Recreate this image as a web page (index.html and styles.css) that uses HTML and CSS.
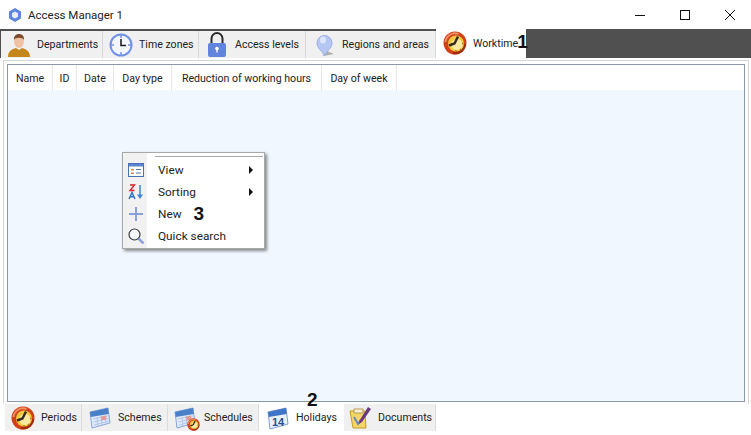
FILE: index.html
```html
<!DOCTYPE html>
<html lang="en">
<head>
  <meta charset="UTF-8">
  <title>Access Manager 1</title>
  <link rel="stylesheet" href="styles.css">
</head>
<body>

<svg class="defs" width="0" height="0">
  <defs>
    <symbol id="ic-worktime" viewBox="0 0 24 24">
      <circle cx="12" cy="12" r="11.5" fill="#d2401a"/>
      <path d="M2.500 11a9.500 9.500 0 0 1 13-8" fill="none" stroke="#ee8f66" stroke-width="2"/>
      <path d="M22 13a10 10 0 0 1-12 9" fill="none" stroke="#9c2a10" stroke-width="2"/>
      <circle cx="13" cy="12.500" r="8" fill="#f2c83e"/>
      <circle cx="14" cy="13.500" r="5.500" fill="#f9e9a0"/>
      <path d="M15 5.500l-3.500 7 -5.500 2" fill="none" stroke="#352c24" stroke-width="2.400"/>
      <path d="M19 12.500h1.500M13 19v1.500M17 18l1 1" stroke="#a37a22" stroke-width="1.500"/>
    </symbol>
    <symbol id="ic-schemes" viewBox="0 0 24 24">
      <path d="M2 6l18-4 2 15-18 5z" fill="#dfe9f8" stroke="#86a6d8"/>
      <path d="M2 6l18-4 .8 6-18 3z" fill="#4a80c8"/>
      <path d="M5 13l15-3M5.400 16l15.200-3.500M6 19l15-4M9 11l1 9.500M13 10l1 9.500M17 9.500l1 9" stroke="#a9c0e6" stroke-width=".8"/>
      <path d="M13 10.500l5-1 .5 4-5 1z" fill="#e79a92"/>
    </symbol>
  </defs>
</svg>

<div class="titlebar">
  <svg class="app-icon" width="14" height="14" viewBox="0 0 14 14">
    <path d="M7 0l6 3.500v7L7 14l-6-3.500v-7z" fill="#5f86dc"/>
    <path d="M7 3.500l3 1.800v3.400l-3 1.800-3-1.800V5.300z" fill="#e6edfb"/>
  </svg>
  <span class="title">Access Manager 1</span>
  <div class="win-btns">
    <svg width="10" height="10" viewBox="0 0 10 10"><path d="M0 5.500h10" stroke="#111"/></svg>
    <svg width="10" height="10" viewBox="0 0 10 10"><rect x=".5" y=".5" width="9" height="9" fill="none" stroke="#111"/></svg>
    <svg width="10" height="10" viewBox="0 0 10 10"><path d="M0 0l10 10M10 0L0 10" stroke="#111"/></svg>
  </div>
</div>

<div class="tabs-top">
  <div class="tab tab-dep">
    <svg width="22" height="25" viewBox="0 0 22 25">
      <ellipse cx="11" cy="9" rx="5" ry="7" fill="#efc1a2"/>
      <path d="M6 8C5 0 17 0 16 8c-1-3-9-3-10 0z" fill="#7d4c2c"/>
      <path d="M0 25c0-6 4-8 8-9l3 2 3-2c4 1 8 3 8 9z" fill="#c4851a"/>
    </svg>
    <span>Departments</span>
  </div>
  <div class="tab tab-zones">
    <svg width="24" height="24" viewBox="0 0 24 24">
      <circle cx="12" cy="12" r="10.500" fill="#f4f7fe" stroke="#7393e2" stroke-width="2"/>
      <path d="M12 1v4M12 19v4M1 12h4M19 12h4" stroke="#7393e2" stroke-width="1.500"/>
      <path d="M12 6v6.500h5" fill="none" stroke="#222" stroke-width="1.600"/>
    </svg>
    <span>Time zones</span>
  </div>
  <div class="tab tab-levels">
    <svg width="20" height="25" viewBox="0 0 20 25">
      <path d="M4.500 12V6.500a5.500 5.500 0 0 1 11 0V12" fill="none" stroke="#2a2a2a" stroke-width="2"/>
      <rect x="1" y="11" width="18" height="14" rx="2" fill="#6384de"/>
      <circle cx="10" cy="16.500" r="1.800" fill="#fff"/>
      <path d="M9.300 17h1.400v3.500H9.300z" fill="#fff"/>
    </svg>
    <span>Access levels</span>
  </div>
  <div class="tab tab-regions">
    <svg width="22" height="24" viewBox="0 0 22 24">
      <path d="M9 23l10-2-7-3z" fill="#b0b0b0"/>
      <path d="M9 23c-1-5-7-7-7-13a7.500 7.500 0 0 1 15 0c0 6-6 8-8 13z" fill="#b6c6f3" stroke="#9cb0e8"/>
      <ellipse cx="8" cy="7" rx="3" ry="3.500" fill="#dfe6fb"/>
    </svg>
    <span>Regions and areas</span>
  </div>
  <div class="tab tab-work active">
    <svg width="24" height="24"><use href="#ic-worktime"/></svg>
    <span>Worktime</span><b class="mark">1</b>
  </div>
</div>

<div class="panel">
  <div class="grid">
    <div class="grid-head">
      <div class="col col-name">Name</div>
      <div class="col col-id">ID</div>
      <div class="col col-date">Date</div>
      <div class="col col-type">Day type</div>
      <div class="col col-red">Reduction of working hours</div>
      <div class="col col-dow">Day of week</div>
    </div>
    <div class="grid-body">
      <div class="menu">
        <div class="menu-row">
          <svg width="16" height="14" viewBox="0 0 16 14">
            <rect x=".5" y=".5" width="15" height="13" fill="#fff" stroke="#4a70b8"/>
            <path d="M1 1h14v2.500H1z" fill="#5a86d0"/>
            <path d="M3 6h3v1.500H3zM3 9.500h3V11H3z" fill="#d8873c"/>
            <path d="M8 6h5v1H8zM8 9.500h5v1H8z" fill="#5a76a8"/>
          </svg>
          <span class="menu-text">View</span><i class="arrow"></i>
        </div>
        <div class="menu-row">
          <svg width="16" height="16" viewBox="0 0 16 16">
            <path d="M2 1h4.500L2 6.500h4.500" fill="none" stroke="#d8232a" stroke-width="1.400"/>
            <path d="M1 15l3-6.500L7 15M2 12.800h4" fill="none" stroke="#2f6fc4" stroke-width="1.400"/>
            <path d="M12 1v11" stroke="#3d86d8" stroke-width="1.500"/>
            <path d="M9 10.500l3 4.500 3-4.500z" fill="#3d86d8"/>
          </svg>
          <span class="menu-text">Sorting</span><i class="arrow"></i>
        </div>
        <div class="menu-row">
          <svg width="16" height="16" viewBox="0 0 16 16"><path d="M8 1v14M1 8h14" stroke="#8ba1dc" stroke-width="2"/></svg>
          <span class="menu-text">New</span><b class="mark mark-menu">3</b>
        </div>
        <div class="menu-row">
          <svg width="16" height="16" viewBox="0 0 16 16">
            <circle cx="6.500" cy="6.500" r="5.500" fill="#f4f7fc" stroke="#3c3c3c" stroke-width="1.200"/>
            <path d="M10.500 10.500l5 5" stroke="#8ba1dc" stroke-width="2.500"/>
          </svg>
          <span class="menu-text">Quick search</span>
        </div>
      </div>
    </div>
  </div>
</div>

<div class="tabs-bottom">
  <div class="btab btab-per">
    <svg width="24" height="24"><use href="#ic-worktime"/></svg>
    <span>Periods</span>
  </div>
  <div class="btab btab-sch">
    <svg width="24" height="24"><use href="#ic-schemes"/></svg>
    <span>Schemes</span>
  </div>
  <div class="btab btab-sched">
    <span class="stack">
      <svg width="24" height="24"><use href="#ic-schemes"/></svg>
      <svg class="stack-clock" width="13" height="13"><use href="#ic-worktime"/></svg>
    </span>
    <span>Schedules</span>
  </div>
  <div class="btab btab-hol active">
    <svg width="24" height="24" viewBox="0 0 24 24">
      <path d="M2 6l18-4 2 16-18 5z" fill="#e9f0fa" stroke="#7f9fd0"/>
      <path d="M2 6l18-4 .8 6-18 3z" fill="#3f74c8"/>
      <text class="cal-num" x="6" y="20">14</text>
    </svg>
    <span>Holidays</span>
    <b class="mark mark-hol">2</b>
  </div>
  <div class="btab btab-doc">
    <svg width="24" height="24" viewBox="0 0 24 24">
      <path d="M2 5h15l1 17H5z" fill="#f3d766" stroke="#c59a2a"/>
      <path d="M6 3h9v4H6z" fill="#f6f0d8" stroke="#b99a4a"/>
      <path d="M6 11l4 7 3-4" fill="none" stroke="#6a86c4" stroke-width="2"/>
      <path d="M20 1l3 2-9 13-3 2 .5-3.500z" fill="#6a3a7c"/>
    </svg>
    <span>Documents</span>
  </div>
</div>

</body>
</html>
```

FILE: styles.css
```css
html, body {
  margin: 0;
  padding: 0;
}
body {
  width: 751px;
  height: 435px;
  overflow: hidden;
  background: #fff;
  font-family: Roboto, 'Open Sans', Arial, sans-serif;
  font-size: 10.6px;
  color: #222;
  white-space: nowrap;
}
svg {
  flex: none;
}
.defs {
  display: block;
  height: 0;
}
.titlebar {
  display: flex;
  align-items: center;
  height: 29px;
  padding-left: 8px;
}
.title {
  margin-left: 6px;
  font-size: 11.5px;
}
.win-btns {
  display: flex;
  gap: 35px;
  margin-left: auto;
  padding-right: 16px;
}
.tabs-top {
  display: flex;
  height: 29px;
  padding-left: 1px;
  background: #505050;
}
.tab {
  display: flex;
  align-items: center;
  box-sizing: border-box;
  height: 27px;
  margin-top: 2px;
  background: #f0f0f0;
  border-right: 1px solid #d9d9d9;
}
.tab-dep { width: 102px; padding-left: 7px; gap: 7px; }
.tab-zones { width: 96px; padding-left: 6px; gap: 6px; }
.tab-levels { width: 107px; padding-left: 8px; gap: 8px; }
.tab-regions { width: 130px; padding-left: 9px; gap: 5px; }
.tab.active {
  height: 30px;
  margin-top: 0;
  background: #fff;
  border: 0;
}
.tab-work {
  width: 90px;
  padding: 0 0 2px 7px;
  gap: 6px;
}
.mark {
  font-family: 'Liberation Sans', Arial, sans-serif;
  font-weight: bold;
  font-size: 19px;
  color: #111;
}
.tab-work .mark {
  margin: 0 0 2px -7px;
}
.panel {
  box-sizing: border-box;
  height: 344px;
  margin: 2px 2px 0 3px;
  padding: 3px 3px 2px 3px;
  border: 1px solid #d4d4d4;
  border-bottom: 0;
}
.grid {
  display: flex;
  flex-direction: column;
  box-sizing: border-box;
  height: 100%;
  border: 1px solid #8a98a8;
}
.grid-head {
  display: flex;
  flex: none;
  height: 25px;
  background: #fff;
}
.col {
  display: flex;
  align-items: center;
  justify-content: center;
  box-sizing: border-box;
  padding-top: 1px;
  border-right: 1px solid #e6e6e6;
}
.col-name { width: 45px; }
.col-id { width: 24px; }
.col-date { width: 37px; }
.col-type { width: 58px; }
.col-red { width: 150px; }
.col-dow { width: 75px; }
.grid-body {
  position: relative;
  flex: 1;
  background: #f0f7fe;
}
.menu {
  position: absolute;
  left: 114px;
  top: 62px;
  box-sizing: border-box;
  width: 143px;
  height: 97px;
  padding-top: 6px;
  border: 1px solid #a8a8a8;
  font-size: 11.8px;
  background: linear-gradient(to right, #f1f1f1 24px, #fff 24px);
  box-shadow: 2px 2px 3px rgba(0,0,0,0.45);
}
.menu::before {
  content: "";
  position: absolute;
  top: 3px;
  left: 32px;
  right: 1px;
  border-top: 1px solid #a8a8a8;
}
.menu-row {
  position: relative;
  display: flex;
  align-items: center;
  height: 22px;
  padding-left: 5px;
}
.menu-row svg {
  width: 16px;
}
.menu-text {
  margin-left: 14px;
}
.arrow {
  position: absolute;
  right: 11px;
  top: 7px;
  border-left: 4px solid #111;
  border-top: 4px solid transparent;
  border-bottom: 4px solid transparent;
}
.mark-menu {
  margin-left: 12px;
}
.tabs-bottom {
  display: flex;
  height: 27px;
  padding-left: 5px;
}
.btab {
  display: flex;
  align-items: center;
  box-sizing: border-box;
  height: 27px;
  background: #f0f0f0;
  border-right: 1px solid #dcdcdc;
}
.btab span {
  margin-top: -1px;
}
.btab-per { width: 77px; padding-left: 6px; gap: 6px; }
.btab-sch { width: 86px; padding-left: 6px; gap: 6px; }
.btab-sched { width: 91px; padding-left: 5px; gap: 7px; }
.btab-hol { width: 85px; padding-left: 7px; gap: 6px; }
.btab-doc { width: 92px; padding-left: 4px; gap: 6px; }
.btab.active {
  position: relative;
  height: 31px;
  margin-top: -2px;
  background: #fff;
  border: 0;
}
.mark-hol {
  position: absolute;
  left: 48px;
  top: -13px;
}
.btab .stack {
  position: relative;
  display: block;
  width: 24px;
  height: 24px;
  margin-top: 0;
}
.stack-clock {
  position: absolute;
  right: -3px;
  bottom: -1px;
}
.cal-num {
  font-family: 'Liberation Sans', Arial, sans-serif;
  font-weight: bold;
  font-size: 11px;
  fill: #2a4f90;
}
```
